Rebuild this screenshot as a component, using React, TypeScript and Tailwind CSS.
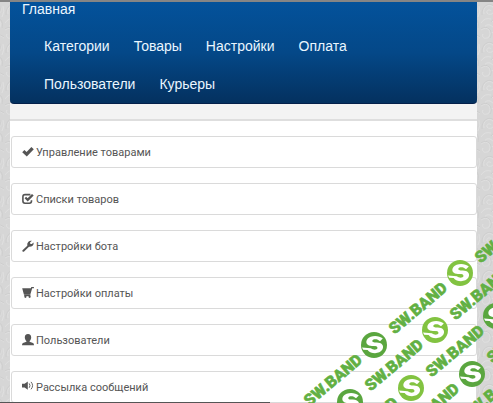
const navLinks = ["Категории", "Товары", "Настройки", "Оплата", "Пользователи", "Курьеры"]

const menuItems = [
  { icon: "check", label: "Управление товарами" },
  { icon: "list", label: "Списки товаров" },
  { icon: "wrench", label: "Настройки бота" },
  { icon: "cart", label: "Настройки оплаты" },
  { icon: "user", label: "Пользователи" },
  { icon: "volume", label: "Рассылка сообщений" },
]

const badges = [
  { x: 460, y: 273, color: "#82c341" },
  { x: 374, y: 345, color: "#5aa63f" },
  { x: 435, y: 330, color: "#82c341" },
  { x: 496, y: 316, color: "#5aa63f" },
  { x: 350, y: 402, color: "#5aa63f" },
  { x: 411, y: 388, color: "#82c341" },
  { x: 472, y: 374, color: "#5aa63f" },
]

const words = [
  { x: 504, y: 237 },
  { x: 418, y: 308 },
  { x: 479, y: 294 },
  { x: 333, y: 380 },
  { x: 394, y: 365 },
  { x: 455, y: 351 },
  { x: 516, y: 337 },
  { x: 369, y: 423 },
  { x: 430, y: 409 },
  { x: 492, y: 394 },
]

function Icon({ name }: { name: string }) {
  return (
    <svg viewBox="0 0 12 12" className="h-3 w-3 shrink-0 fill-current" aria-hidden="true">
      {name === "check" && <path d="M0.2 6.2 2.4 4 4.6 6.1 9.4 1 11.8 3.2 4.8 10.4Z" />}
      {name === "list" && (
        <>
          <path
            d="M8.4 1.6H3Q0.9 1.6 0.9 3.7V8.1Q0.9 10.2 3 10.2H7.4Q9.5 10.2 9.5 8.1V7.2"
            fill="none"
            stroke="currentColor"
            strokeWidth="1.6"
          />
          <path d="M2.6 5.2 4.1 3.8 5.6 5.2 10 1 11.7 2.6 5.7 8.6Z" />
        </>
      )}
      {name === "wrench" && (
        <path d="M0.5 10.2 5.3 5.7Q4.8 3.2 6.4 1.7 7.9 0.3 9.9 0.8L8 2.6 8.4 3.9 9.8 4.1 11.6 2.4Q12 4.4 10.6 5.7 9.1 7 7 6.8L2.1 11.5Q1.2 12 0.6 11.4 0 10.8 0.5 10.2Z" />
      )}
      {name === "cart" && (
        <>
          <path d="M0.2 1.3H8.9L9.3 0H11.9V1.2H10.2L8.3 7.6H1.9Z" />
          <path d="M2.2 7.4H8.4V9.2H2.2Z" />
          <circle cx="3.4" cy="9.8" r="1.1" />
          <circle cx="7.6" cy="9.8" r="1.1" />
        </>
      )}
      {name === "user" && (
        <path d="M6 0C8.2 0 9.2 1.6 9.2 3.4 9.2 5 8.4 6.2 7.6 6.9V7.7L11 9.1Q12 9.5 12 11.2H0Q0 9.5 1 9.1L4.4 7.7V6.9C3.6 6.2 2.8 5 2.8 3.4 2.8 1.6 3.8 0 6 0Z" />
      )}
      {name === "volume" && (
        <>
          <path d="M0 2.8H2.6L5.8 0.4V8.8L2.6 6.4H0Z" />
          <path
            d="M7.2 2.4Q8.8 4.6 7.2 6.8M9 0.9Q12.2 4.6 9 8.3"
            fill="none"
            stroke="currentColor"
            strokeWidth="0.9"
          />
        </>
      )}
    </svg>
  )
}

function Wallpaper() {
  return (
    <svg className="absolute inset-0 h-full w-full" aria-hidden="true">
      <defs>
        <pattern id="swirls" width="28" height="38" patternUnits="userSpaceOnUse" patternTransform="translate(5 0)">
          <g fill="none" stroke="#dfdfdf" strokeWidth="1">
            <path d="M3 12C1 5 8 1 12 5 16 10 9 15 6 11 5 8 9 7 10 9" />
            <path d="M11 20C18 13 26 18 23 25 20 31 12 27 16 22 18 20 21 23 18 25" />
            <path d="M0 28C7 23 11 30 8 35 4 38 0 35 2 32M18 2C25 3 26 10 21 12" />
            <path d="M13 38C15 31 23 32 27 36M0 21Q4 15 10 17M25 15Q28 10 26 4" />
            <path d="M14 12Q17 16 21 15M4 24Q8 21 12 25M10 31Q15 29 17 32" />
          </g>
          <g fill="none" stroke="#cccccc" strokeWidth="0.8">
            <path d="M1 13C0 4 8 0 13 4M10 20C17 10 28 17 25 26" />
            <path d="M0 27C7 22 13 30 9 36M19 0Q27 4 21 13M15 35Q21 30 27 35" />
          </g>
        </pattern>
      </defs>
      <rect width="100%" height="100%" fill="url(#swirls)" />
    </svg>
  )
}

function Watermark() {
  return (
    <svg viewBox="293 220 200 183" className="pointer-events-none absolute right-0 bottom-0 w-[200px]" aria-hidden="true">
      {badges.map((badge) => (
        <g key={`${badge.x}-${badge.y}`} transform={`translate(${badge.x} ${badge.y})`}>
          <circle r="13" fill={badge.color} />
          <path
            d="M8.8 -6.4C5 -10 -3.6 -9.8 -6.6 -6 -9.4 -2 -6.4 1 -2 1 1.4 1 3.8 1.2 3.4 3.2 2.8 5.2 -1.2 5 -3.2 3.2L-12 2.6 -10.8 4.8 -6.4 5C-3 9.4 5.8 9.2 8.4 4.6 10.6 0.4 7.4 -2.4 2.8 -2.4 -0.4 -2.4 -2.2 -2.8 -1.6 -4.4 -0.8 -6.4 3.6 -6.4 6 -3.8Z"
            fill="#fff"
          />
        </g>
      ))}
      {words.map((word) => (
        <text
          key={`${word.x}-${word.y}`}
          transform={`translate(${word.x} ${word.y}) rotate(-40)`}
          textAnchor="middle"
          dominantBaseline="central"
          strokeWidth="0.5"
          className="fill-[#62b043] stroke-[#62b043] font-['Roboto'] text-[16px] font-black"
        >
          SW.BAND
        </text>
      ))}
    </svg>
  )
}

export default function App() {
  return (
    <div className="relative overflow-hidden border-t-2 border-[#858585] bg-[#d6d6d6] font-['Liberation_Sans',sans-serif]">
      <Wallpaper />

      <div className="relative mr-4 ml-[10px] bg-white">
        <header className="border-b-2 border-[#dedede] bg-[#f3f3f3] pb-[15px]">
          <nav className="rounded-b border-b border-[#04204a] bg-linear-to-b from-[#03529b] via-[#044888] to-[#04315f] pb-[10px] text-sm leading-[18px] text-[#eaf6ff]">
            <a href="#" className="block h-4 pl-3 leading-[14px]">Главная</a>
            <ul className="flex flex-wrap gap-x-6 gap-y-5 pt-[19px] pr-[100px] pl-[34px]">
              {navLinks.map((link) => (
                <li key={link}>
                  <a href="#">{link}</a>
                </li>
              ))}
            </ul>
          </nav>
        </header>

        <main className="flex flex-col gap-[15px] pt-[15px] pl-px">
          {menuItems.map((item) => (
            <a
              key={item.label}
              href="#"
              className="flex h-8 items-center gap-[2px] rounded-[3px] border border-[#dadada] pl-[10px] font-['Roboto',sans-serif] text-[11px] text-[#555]"
            >
              <Icon name={item.icon} />
              <span className="pt-[2px]">{item.label}</span>
            </a>
          ))}
        </main>
      </div>

      <Watermark />
      <div className="absolute bottom-0 left-0 h-px w-[270px] bg-[#555]" />
    </div>
  )
}
